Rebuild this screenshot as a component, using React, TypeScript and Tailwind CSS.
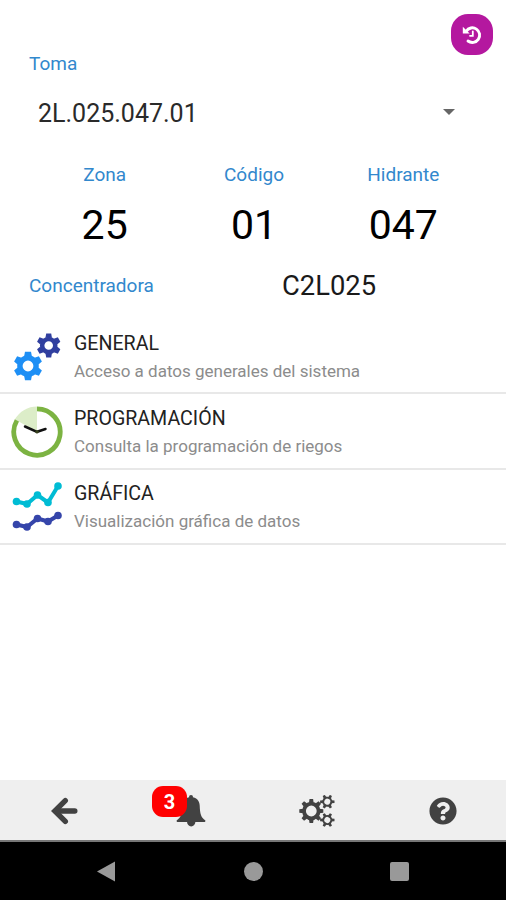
import React from 'react';
import { FaQuestionCircle } from 'react-icons/fa';

interface GearProps {
    cx: number;
    cy: number;
    body: number;
    hole: number;
    tip: number;
    teeth: number;
    toothWidth: number;
    color: string;
    rotate?: number;
}

const Gear: React.FC<GearProps> = ({ cx, cy, body, hole, tip, teeth, toothWidth, color, rotate = 0 }) => (
    <g transform={`translate(${cx} ${cy}) rotate(${rotate})`}>
        <circle r={(body + hole) / 2} fill="none" stroke={color} strokeWidth={body - hole} />
        {Array.from({ length: teeth }, (_, i) => (
            <path
                key={i}
                transform={`rotate(${(360 / teeth) * i})`}
                d={`M${-toothWidth * 0.65} ${-body + 1} L${-toothWidth / 2} ${-tip} H${toothWidth / 2} L${toothWidth * 0.65} ${-body + 1} Z`}
                fill={color}
            />
        ))}
    </g>
);

const GeneralIcon = () => (
    <svg className="w-[50px] h-[50px]" viewBox="0 0 50 50">
        <Gear cx={37.7} cy={13.5} body={8.8} hole={4.3} tip={12} teeth={6} toothWidth={5} color="#303f9f" />
        <Gear cx={17} cy={34} body={10.8} hole={5.4} tip={14.3} teeth={6} toothWidth={6} color="#1e8ff5" />
    </svg>
);

const ClockIcon = () => (
    <svg className="w-[52px] h-[52px]" viewBox="0 0 52 52">
        <path d="M26 26 V0.5 A25.5 25.5 0 0 0 3.9 13.3 Z" fill="#dcedc8" />
        <path d="M26 2.8 A23.2 23.2 0 1 1 5.9 14.4" fill="none" stroke="#7cb342" strokeWidth="4.8" />
        <path d="M14 20.5 L26 25.8 L34.5 23" fill="none" stroke="#111" strokeWidth="2.5" strokeLinecap="round" />
        <circle cx="26" cy="25.8" r="1.8" fill="#37421d" />
    </svg>
);

const Trend = ({ points, color }: { points: number[][]; color: string }) => (
    <g fill={color} stroke={color}>
        <polyline points={points.join(' ')} fill="none" strokeWidth="4" />
        {points.map(([x, y]) => (
            <circle key={x} cx={x} cy={y} r="3.8" stroke="none" />
        ))}
    </g>
);

const ChartIcon = () => (
    <svg className="w-[52px] h-[52px]" viewBox="0 0 52 52">
        <Trend points={[[5.5, 20.5], [16, 23], [26.5, 14], [37, 21.5], [47, 5]]} color="#00bcd4" />
        <Trend points={[[5.5, 43.5], [16, 46], [26.5, 37.5], [37, 40.5], [47, 34.5]]} color="#3545aa" />
    </svg>
);

const HistoryIcon = () => (
    <svg className="w-5 h-5" viewBox="0 0 20 20" fill="none" stroke="white">
        <path d="M4.2 6.2 A7.3 7.3 0 1 1 6 16" strokeWidth="2.9" strokeLinecap="round" />
        <path d="M0.8 1.8 V8.5 H7.7 Z" fill="white" stroke="none" />
        <path d="M10.8 6.3 V10.8 H8" strokeWidth="1.8" strokeLinecap="round" />
    </svg>
);

const BackIcon = () => (
    <svg className="w-7 h-7" viewBox="0 0 28 28" fill="none" stroke="#424242" strokeWidth="5.4" strokeLinecap="round">
        <path d="M14.3 3.6 L3.8 14 L14.3 24.4" strokeLinejoin="miter" />
        <path d="M5 14 H23.8" />
    </svg>
);

const BellIcon = () => (
    <svg className="w-[30px] h-8" viewBox="0 0 30 32" fill="#424242">
        <circle cx="15" cy="2" r="2" />
        <path d="M15 2 C20.5 2 23.5 5.7 23.7 10.5 C24 19 25 22.5 29.4 25.5 C29.5 26.6 29 27 28 27 H2 C1 27 0.5 26.6 0.6 25.5 C5 22.5 6 19 6.3 10.5 C6.5 5.7 9.5 2 15 2 Z" />
        <path d="M11 26.5 A4.2 5 0 0 0 19.4 26.5 Z" />
    </svg>
);

const SettingsIcon = () => (
    <svg className="w-9 h-8" viewBox="0 0 36 32">
        <Gear cx={12.3} cy={16} body={9.2} hole={5.4} tip={12} teeth={8} toothWidth={3.6} color="#424242" />
        <Gear cx={28.3} cy={6.7} body={5} hole={3} tip={7.2} teeth={6} toothWidth={2.4} color="#424242" rotate={30} />
        <Gear cx={28.3} cy={25} body={5} hole={3} tip={7.2} teeth={6} toothWidth={2.4} color="#424242" rotate={30} />
    </svg>
);

const fields = [
    { label: 'Zona', value: '25' },
    { label: 'Código', value: '01' },
    { label: 'Hidrante', value: '047' },
];

const menuItems = [
    { title: 'GENERAL', description: 'Acceso a datos generales del sistema', icon: <GeneralIcon /> },
    { title: 'PROGRAMACIÓN', description: 'Consulta la programación de riegos', icon: <ClockIcon /> },
    { title: 'GRÁFICA', description: 'Visualización gráfica de datos', icon: <ChartIcon /> },
];

const App: React.FC = () => {
    return (
        <div className="flex h-[900px] w-[506px] flex-col overflow-hidden bg-white font-['Roboto',sans-serif] text-black">
            {/* Header */}
            <div className="flex h-[86px] items-start justify-between pt-[14px] pr-[13px] pl-[29px]">
                <span className="mt-[36px] text-[19px] leading-7 text-[#3288cd]">Toma</span>
                <button className="flex h-[41px] w-[42px] items-center justify-center rounded-[17px] bg-[#b4189f]">
                    <HistoryIcon />
                </button>
            </div>
            <div className="flex h-[54px] items-center justify-between pr-[51px] pl-[38px]">
                <span className="pt-px text-[25px] text-[#2a2a2a]">2L.025.047.01</span>
                <svg className="mb-[2px] h-[6px] w-3" viewBox="0 0 12 6">
                    <path d="M0 0 H12 L6 6 Z" fill="#666" />
                </svg>
            </div>

            {/* Hydrant data */}
            <div className="grid h-[120px] grid-cols-3 pt-[21px] pr-[28px] pl-[30px] text-center">
                {fields.map((field) => (
                    <div key={field.label}>
                        <div className="text-[19px] leading-7 text-[#3288cd]">{field.label}</div>
                        <div className="mt-[11px] text-[41px] leading-[50px]">{field.value}</div>
                    </div>
                ))}
            </div>
            <div className="flex h-[59px] items-center pb-[6px] pl-[29px]">
                <span className="w-[253px] text-[19px] text-[#3288cd]">Concentradora</span>
                <span className="text-[27.4px] text-[#1a1a1a]">C2L025</span>
            </div>

            {/* Menu */}
            <div className="flex-1">
                {menuItems.map((item) => (
                    <div key={item.title} className="flex h-[75.3px] items-center border-b-2 border-[#e8e8e8] pt-[2px] pl-[11px]">
                        <div className="flex w-[63px]">{item.icon}</div>
                        <div className="pt-px">
                            <div className="text-[19.6px] leading-7 text-[#222]">{item.title}</div>
                            <div className="text-[17px] leading-[27px] text-[#8c8c8c]">{item.description}</div>
                        </div>
                    </div>
                ))}
            </div>

            {/* Toolbar */}
            <div className="grid h-[62px] grid-cols-4 place-items-center border-b-2 border-[#777] bg-[#efefef] pt-[2px] pl-[2px]">
                <BackIcon />
                <div className="relative">
                    <BellIcon />
                    <span className="absolute -top-[9px] -left-[24px] flex h-[31px] w-[35px] items-center justify-center rounded-[11px] bg-[#ff0000] text-[20px] font-bold text-white">
                        3
                    </span>
                </div>
                <SettingsIcon />
                <FaQuestionCircle className="h-7 w-7 text-[#424242]" />
            </div>

            {/* Android navigation */}
            <div className="flex h-[58px] items-center justify-between bg-black pr-[97px] pl-[97px]">
                <svg className="h-[21px] w-[19px]" viewBox="0 0 19 21">
                    <path d="M0 10.5 L18 0.5 V20.5 Z" fill="#999" />
                </svg>
                <div className="h-[19px] w-[19px] rounded-full bg-[#999]" />
                <div className="h-[19px] w-[19px] rounded-[2px] bg-[#999]" />
            </div>
        </div>
    );
};

export default App;
